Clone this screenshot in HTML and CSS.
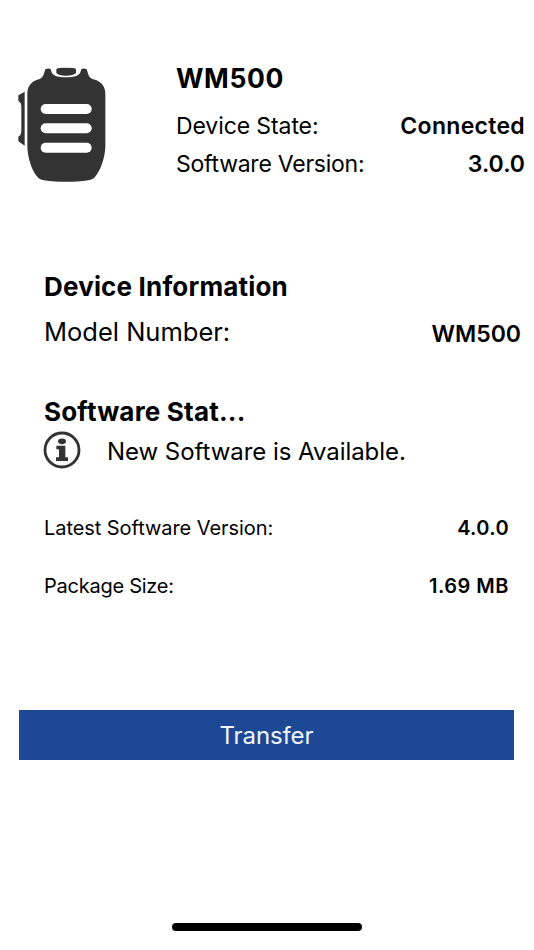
FILE: index.html
```html
<!DOCTYPE html>
<html lang="en">
<head>
    <meta charset="UTF-8">
    <meta name="viewport" content="width=device-width, initial-scale=1.0">
    <title>WM500</title>
    <link rel="stylesheet" href="styles.css">
</head>
<body>

<header class="device">
    <svg class="device-icon" viewBox="0 0 330 420" fill="#333">
        <path d="M106 43 Q114 38 122 42 C125 59 134 67 168 67 C202 67 211 59 214 42 Q222 38 230 43 C235 58 236 68 247 72 C270 77 286 91 286 116 V276 C284 312 272 344 257 363 C252 371 244 374 235 376 C192 382 145 382 102 376 C93 374 85 371 80 363 C65 344 54 312 52 276 V116 C52 91 68 76 89 72 C100 68 101 58 106 43 Z"/>
        <path d="M139 43 Q141 40 146 39 Q168 37 190 39 Q196 40 198 43 V54 C192 60 183 62 168 62 C153 62 144 60 139 54 Z"/>
        <path d="M44 110 V272 L25 259 V245 Q34 239 34 230 V152 Q34 143 25 137 V121 Z"/>
        <rect x="92" y="147" width="153" height="30" rx="15" fill="#fff"/>
        <rect x="92" y="205" width="153" height="30" rx="15" fill="#fff"/>
        <rect x="92" y="263" width="153" height="30" rx="15" fill="#fff"/>
    </svg>
    <div class="device-text">
        <h1>WM500</h1>
        <div class="row">
            <span>Device State:</span>
            <b class="state">Connected</b>
        </div>
        <div class="row">
            <span class="version-label">Software Version:</span>
            <b>3.0.0</b>
        </div>
    </div>
</header>

<section class="info">
    <h2>Device Information</h2>
    <div class="row model">
        <span>Model Number:</span>
        <b>WM500</b>
    </div>
</section>

<section class="status">
    <h2>Software Stat...</h2>
    <div class="message">
        <svg class="info-icon" viewBox="0 0 114 114" fill="#333">
            <circle cx="57" cy="57" r="51" fill="#fff" stroke="#333" stroke-width="8.5"/>
            <ellipse cx="57" cy="31" rx="12" ry="8.5"/>
            <path d="M40 44 H67 V79 H75 V90 H39 V79 H48 V55 H40 Z"/>
        </svg>
        <span>New Software is Available.</span>
    </div>
    <div class="row small">
        <span class="latest-label">Latest Software Version:</span>
        <b>4.0.0</b>
    </div>
    <div class="row small">
        <span class="size-label">Package Size:</span>
        <b class="size">1.69 MB</b>
    </div>
</section>

<button class="transfer" type="button">Transfer</button>

<div class="home-bar"></div>

</body>
</html>
```
FILE: styles.css
```css
* {
    box-sizing: border-box;
}
body {
    margin: 0;
    height: 950px;
    padding-top: 55px;
    background-color: #fff;
    color: #000;
    font-family: Inter, "Liberation Sans", sans-serif;
    display: flex;
    flex-direction: column;
    overflow: hidden;
}
h1, h2 {
    margin: 0;
    font-weight: 700;
}
h1 {
    font-size: 26.5px;
    line-height: 38px;
    letter-spacing: 0.6px;
    margin-bottom: 10px;
}
h2 {
    font-size: 26px;
    line-height: 38px;
    letter-spacing: 0.17px;
}
b {
    font-weight: 600;
}
.row {
    display: flex;
    justify-content: space-between;
    white-space: nowrap;
}

.device {
    display: flex;
    height: 140px;
    padding: 0 9px 0 10px;
}
.device-icon {
    width: 110px;
    height: 140px;
    margin-right: 56px;
}
.device-text {
    flex: 1;
    padding-top: 4px;
}
.device-text .row {
    font-size: 23px;
    line-height: 38px;
    letter-spacing: -0.1px;
}
.device-text .version-label {
    letter-spacing: -0.25px;
}
.device-text b {
    letter-spacing: 0;
}
.device-text .state {
    letter-spacing: 0.3px;
}

.info {
    margin: 73px 13px 0 44px;
}
.model {
    font-size: 25.5px;
    line-height: 38px;
    margin-top: 7px;
}
.model b {
    font-size: 23px;
    line-height: 42px;
}

.status {
    margin: 38px 25px 0 44px;
}
.status h2 {
    letter-spacing: 0.2px;
}
.message {
    display: flex;
    align-items: center;
    height: 38px;
    font-size: 24px;
    letter-spacing: -0.05px;
    margin-bottom: 39px;
}
.message span {
    padding-top: 3px;
}
.info-icon {
    width: 38px;
    height: 38px;
    margin: 0 26px 0 -1px;
}
.small {
    font-size: 20px;
    line-height: 40px;
    margin-bottom: 18px;
}
.small b {
    letter-spacing: 0.35px;
}
.small .latest-label {
    letter-spacing: -0.06px;
}
.small .size-label {
    letter-spacing: -0.25px;
}
.small .size {
    letter-spacing: 0.5px;
}

.transfer {
    margin: 86px 20px 0 19px;
    height: 50px;
    padding: 0;
    border: none;
    background-color: #1d4894;
    color: #f1f5fb;
    font-family: inherit;
    font-size: 24px;
    letter-spacing: -0.1px;
}

.home-bar {
    width: 190px;
    height: 8px;
    margin: auto auto 19px 172px;
    border-radius: 4px;
    background-color: #000;
}
```
